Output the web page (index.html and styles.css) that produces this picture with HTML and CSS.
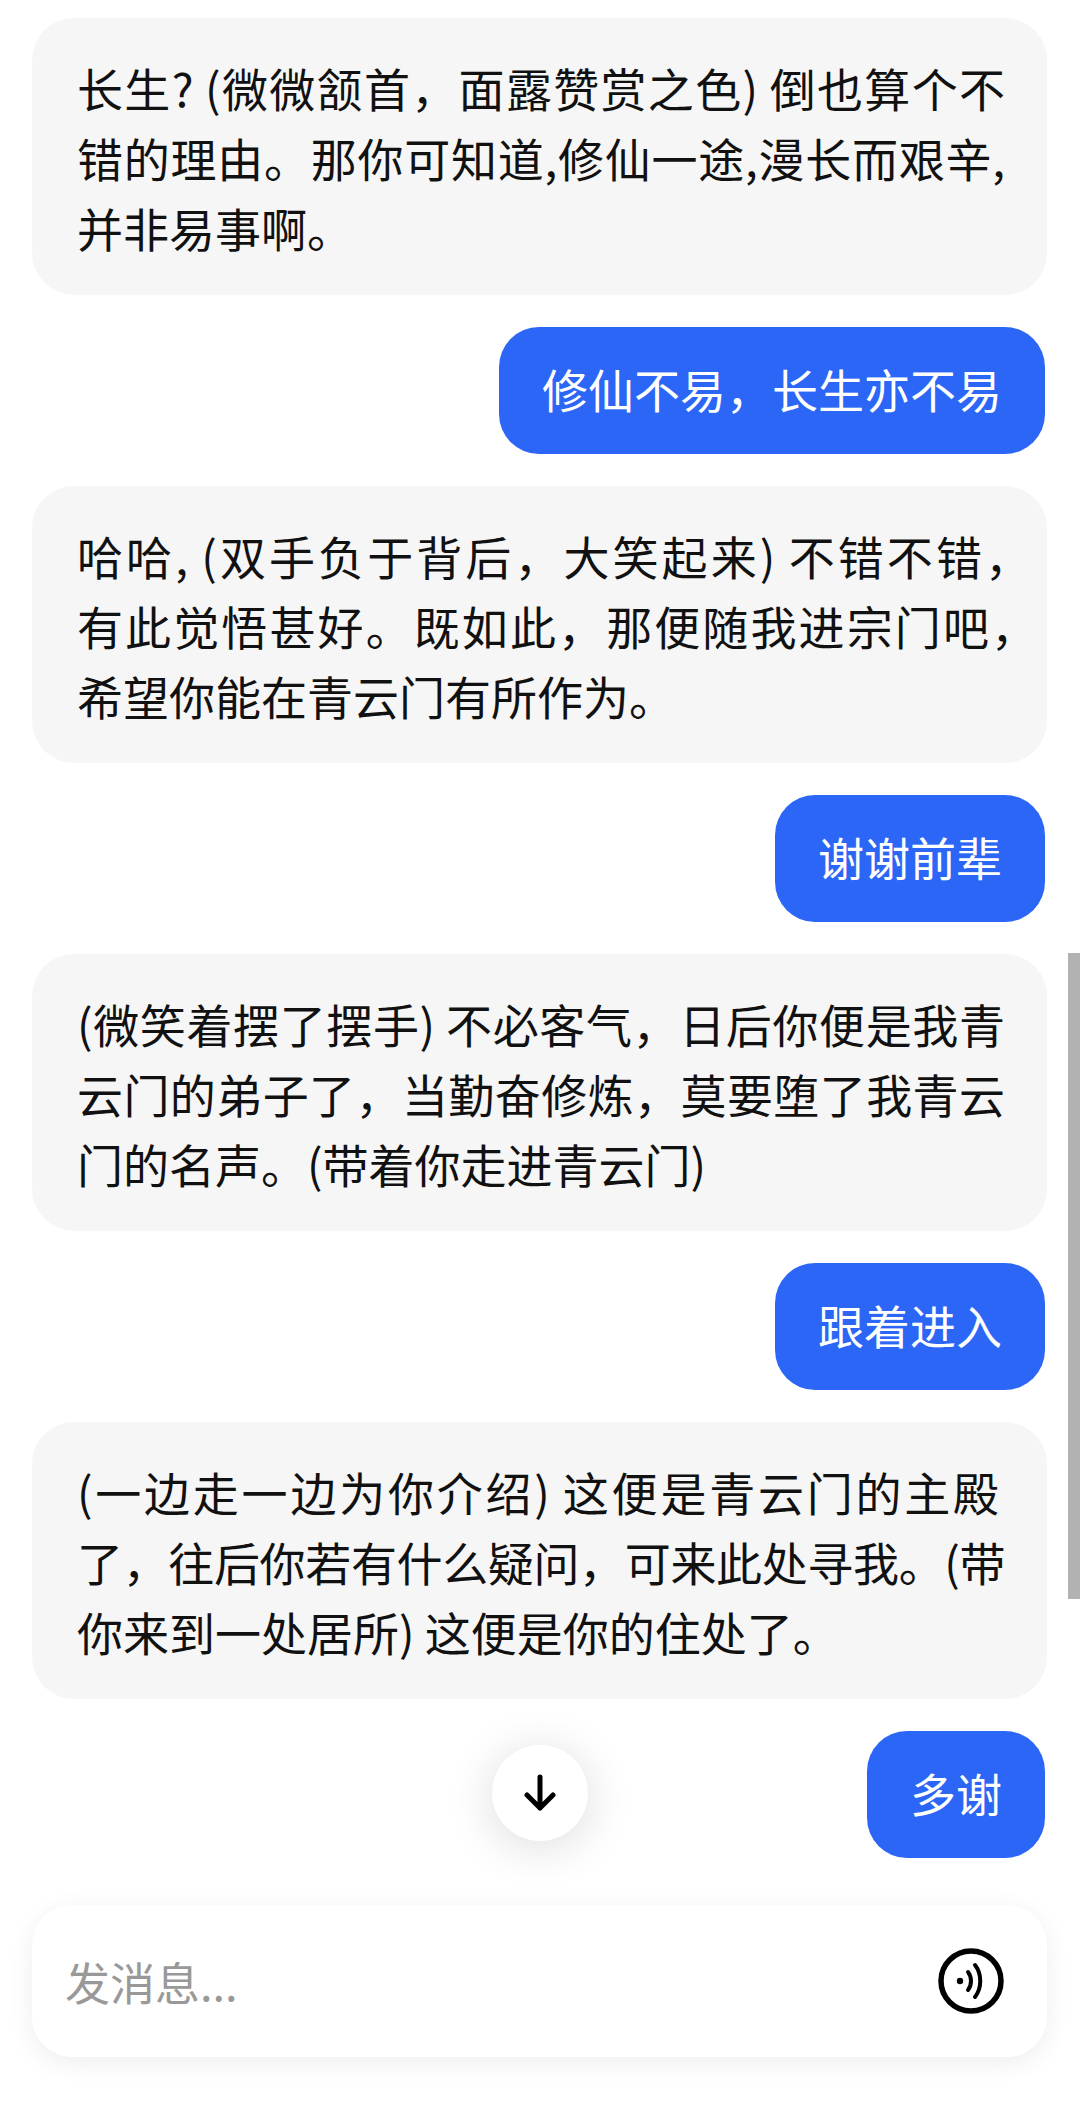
FILE: index.html
```html
<!DOCTYPE html>
<html lang="zh-CN">
<head>
<meta charset="utf-8">
<title>Chat</title>
<link rel="stylesheet" href="styles.css">
</head>
<body>
<div class="screen">
  <main class="thread">
    <div class="msg bot">
      <span class="line fit">长生? (微微颔首，面露赞赏之色) 倒也算个不</span>
      <span class="line fit">错的理由。那你可知道,修仙一途,漫长而艰辛,</span>
      <span class="line">并非易事啊。</span>
    </div>
    <div class="msg me">修仙不易，长生亦不易</div>
    <div class="msg bot">
      <span class="line fit comma-short">哈哈, (双手负于背后，大笑起来) 不错不错，</span>
      <span class="line fit comma">有此觉悟甚好。既如此，那便随我进宗门吧，</span>
      <span class="line">希望你能在青云门有所作为。</span>
    </div>
    <div class="msg me">谢谢前辈</div>
    <div class="msg bot">
      <span class="line fit">(微笑着摆了摆手) 不必客气，日后你便是我青</span>
      <span class="line fit">云门的弟子了，当勤奋修炼，莫要堕了我青云</span>
      <span class="line">门的名声。(带着你走进青云门)</span>
    </div>
    <div class="msg me">跟着进入</div>
    <div class="msg bot">
      <span class="line fit inset">(一边走一边为你介绍) 这便是青云门的主殿</span>
      <span class="line fit tight">了，往后你若有什么疑问，可来此处寻我。(带</span>
      <span class="line">你来到一处居所) 这便是你的住处了。</span>
    </div>
    <div class="msg me">多谢</div>
  </main>
  <footer class="composer">
    <span class="placeholder">发消息...</span>
    <svg class="voice" viewBox="0 0 66 66" width="66" height="66" aria-hidden="true">
      <circle cx="33" cy="33" r="30" fill="none" stroke="#000" stroke-width="5.5"/>
      <circle cx="22" cy="33" r="3.2" fill="#000"/>
      <path d="M30 24c4 5 4 13 0 18" fill="none" stroke="#000" stroke-width="4" stroke-linecap="round"/>
      <path d="M37 17c7 9 7 23 0 32" fill="none" stroke="#000" stroke-width="4" stroke-linecap="round"/>
    </svg>
  </footer>
  <button class="down" type="button" aria-label="scroll down">
    <svg viewBox="0 0 34 38" width="34" height="38" aria-hidden="true">
      <path d="M17 3v31M4 21l13 13 13-13" fill="none" stroke="#000" stroke-width="5" stroke-linecap="round" stroke-linejoin="round"/>
    </svg>
  </button>
  <div class="scrollbar"></div>
</div>
</body>
</html>
```
FILE: styles.css
```css
* { box-sizing: border-box; }
html, body { margin: 0; padding: 0; background: #fff; }
.screen {
  position: relative;
  width: 1080px;
  height: 2124px;
  overflow: hidden;
  padding: 18px 33px 0 32px;
  font-family: "Noto Sans CJK SC", "Noto Sans", sans-serif;
}
.thread {
  display: flex;
  flex-direction: column;
  gap: 32px;
}
.msg {
  font-size: 46px;
  line-height: 70px;
  white-space: nowrap;
}
.bot {
  background: #f6f6f6;
  color: #111;
  padding: 34px 42px 33px 45px;
  border-radius: 42px;
}
.line { display: block; }
.fit {
  white-space: normal;
  text-align: justify;
  text-align-last: justify;
}
.comma { margin-right: -32px; }
.comma-short { margin-right: -26px; }
.inset { margin-right: 6px; }
.tight { letter-spacing: -0.5px; }
.me {
  align-self: flex-end;
  background: #2b66f6;
  color: #fff;
  padding: 26px 43px 31px;
  margin-right: 2px;
  border-radius: 40px;
}
.composer {
  display: flex;
  align-items: center;
  justify-content: space-between;
  height: 152px;
  margin-top: 47px;
  padding: 0 43px 0 33px;
  background: #fff;
  border-radius: 40px;
  box-shadow: 0 6px 26px rgba(0, 0, 0, 0.07);
}
.placeholder { font-size: 45px; color: #999; }
.down {
  position: absolute;
  left: 492px;
  top: 1745px;
  width: 96px;
  height: 96px;
  padding: 0;
  border: 0;
  border-radius: 50%;
  background: #fff;
  display: flex;
  align-items: center;
  justify-content: center;
  box-shadow: 0 6px 48px rgba(0, 0, 0, 0.14);
}
.scrollbar {
  position: absolute;
  left: 1068px;
  top: 953px;
  width: 12px;
  height: 646px;
  background: #b2b2b2;
}
```
